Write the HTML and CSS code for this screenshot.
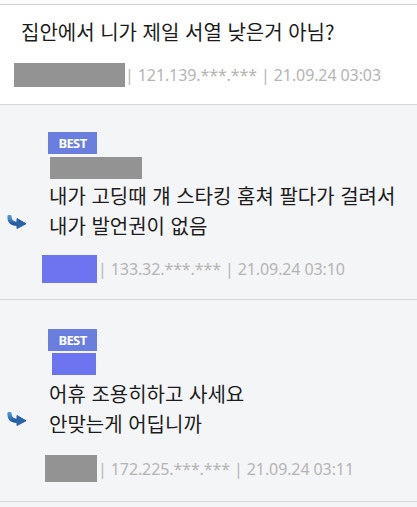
FILE: index.html
```html
<!DOCTYPE html>
<html lang="ko">
<head>
<meta charset="utf-8">
<link rel="stylesheet" href="styles.css">
</head>
<body>
<div class="top-strip"></div>
<section class="post">
  <h1 class="post-title">집안에서 니가 제일 서열 낮은거 아님?</h1>
  <div class="meta">
    <span class="mask mask-gray mask-post"></span>
    <span class="meta-text">| 121.139.***.*** | 21.09.24 03:03</span>
  </div>
</section>

<section class="comment comment-one">
  <div class="reply-icon">
    <svg width="20" height="14" viewBox="0 0 20 14"><defs><linearGradient id="ag1" x1="0" y1="0" x2="0" y2="1"><stop offset="0" stop-color="#4d93d6"/><stop offset="1" stop-color="#24589e"/></linearGradient></defs><path d="M2.5 2 Q2.5 9 11 9" fill="none" stroke="url(#ag1)" stroke-width="4.4" stroke-linecap="round"/><path d="M10 3.5 L19 8.8 L10 13.5 Z" fill="#2a62a8" stroke="#2a62a8" stroke-width="1" stroke-linejoin="round"/></svg>
  </div>
  <div class="comment-body">
    <span class="badge">BEST</span>
    <span class="mask mask-gray mask-name1"></span>
    <p class="comment-text">내가 고딩때 걔 스타킹 훔쳐 팔다가 걸려서<br>내가 발언권이 없음</p>
    <div class="meta meta-comment">
      <span class="mask mask-blue mask-m1"></span>
      <span class="meta-text">| 133.32.***.*** | 21.09.24 03:10</span>
    </div>
  </div>
</section>

<section class="comment comment-two">
  <div class="reply-icon">
    <svg width="20" height="14" viewBox="0 0 20 14"><defs><linearGradient id="ag2" x1="0" y1="0" x2="0" y2="1"><stop offset="0" stop-color="#4d93d6"/><stop offset="1" stop-color="#24589e"/></linearGradient></defs><path d="M2.5 2 Q2.5 9 11 9" fill="none" stroke="url(#ag2)" stroke-width="4.4" stroke-linecap="round"/><path d="M10 3.5 L19 8.8 L10 13.5 Z" fill="#2a62a8" stroke="#2a62a8" stroke-width="1" stroke-linejoin="round"/></svg>
  </div>
  <div class="comment-body">
    <span class="badge">BEST</span>
    <span class="mask mask-blue mask-name2"></span>
    <p class="comment-text">어휴 조용히하고 사세요<br>안맞는게 어딥니까</p>
    <div class="meta meta-comment">
      <span class="mask mask-gray mask-m2"></span>
      <span class="meta-text">| 172.225.***.*** | 21.09.24 03:11</span>
    </div>
  </div>
</section>
</body>
</html>
```

FILE: styles.css
```css
* { box-sizing: border-box; }
html, body { margin: 0; padding: 0; }
body {
  width: 417px;
  height: 507px;
  overflow: hidden;
  background: #f4f5f7;
  font-family: "Noto Sans CJK KR", "Noto Sans", sans-serif;
  color: #1e1e1e;
}
.top-strip {
  height: 5px;
  background: #fbfbfb;
  border-bottom: 1px solid #cfcfcf;
}
.post {
  background: #fff;
  padding: 14px 0 17px 21px;
  border-bottom: 1px solid #d6d6d6;
}
.post-title {
  margin: 0;
  font-size: 20px;
  font-weight: 400;
  line-height: 26px;
  color: #1c1c1c;
}
.meta {
  display: flex;
  align-items: center;
  margin-top: 18px;
  margin-left: -7px;
  height: 24px;
}
.meta-text {
  font-family: "Noto Sans", "Noto Sans CJK KR", sans-serif;
  font-size: 16px;
  color: #b4b4b4;
  white-space: nowrap;
  letter-spacing: -0.1px;
}
.mask { display: block; }
.mask-gray { background: #939393; }
.mask-blue { background: #6c74f0; }
.mask-post { width: 111px; height: 24px; margin-right: 0; }
.comment {
  display: flex;
  border-bottom: 1px solid #d6d6d6;
}
.comment-one { padding: 27px 0 16px; }
.comment-two { padding: 29px 0 19px; }
.reply-icon {
  width: 48px;
  padding: 83px 0 0 7px;
}
.reply-icon svg { display: block; }
.comment-body {
  display: flex;
  flex-direction: column;
  align-items: flex-start;
}
.badge {
  display: block;
  width: 49px;
  height: 22px;
  line-height: 22px;
  background: #6a7ee0;
  color: #fff;
  font-family: "Noto Sans", sans-serif;
  font-weight: 700;
  font-size: 13px;
  text-align: center;
  letter-spacing: -0.6px;
}
.mask-name1 { width: 92px; height: 22px; margin: 3px 0 0 2px; }
.mask-name2 { width: 44px; height: 22px; margin: 2px 0 0 4px; }
.comment-text {
  margin: 2px 0 0 1px;
  font-size: 20px;
  line-height: 30px;
  color: #1c1c1c;
}
.comment-two .comment-text { margin-top: 4px; }
.meta-comment {
  margin-top: 14px;
  margin-left: 0;
  height: 28px;
}
.comment-two .meta-comment { margin-top: 16px; height: 27px; }
.mask-m1 { width: 55px; height: 28px; margin: 0 1px 0 -6px; }
.mask-m2 { width: 52px; height: 27px; margin: 0 1px 0 -3px; }
```
